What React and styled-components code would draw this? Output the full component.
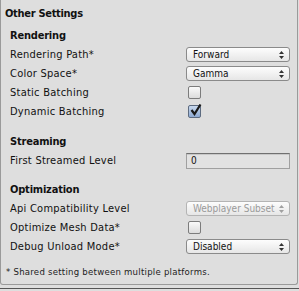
import React from 'react'
import styled, { createGlobalStyle } from 'styled-components'

const GlobalStyle = createGlobalStyle`
  html, body {
    margin: 0;
    padding: 0;
    background: #dedede;
  }
  body {
    width: 299px;
    height: 291px;
    overflow: hidden;
    font-family: "DejaVu Sans Condensed", "DejaVu Sans", "Liberation Sans", sans-serif;
    color: #111;
  }
`

const sections = [
  {
    title: 'Rendering',
    gap: 5,
    rows: [
      { label: 'Rendering Path*', type: 'select', value: 'Forward' },
      { label: 'Color Space*', type: 'select', value: 'Gamma' },
      { label: 'Static Batching', type: 'check', checked: false },
      { label: 'Dynamic Batching', type: 'check', checked: true },
    ],
  },
  {
    title: 'Streaming',
    gap: 12,
    rows: [{ label: 'First Streamed Level', type: 'field', value: '0' }],
  },
  {
    title: 'Optimization',
    gap: 11,
    rows: [
      { label: 'Api Compatibility Level', type: 'select', value: 'Webplayer Subset', disabled: true },
      { label: 'Optimize Mesh Data*', type: 'check', checked: false },
      { label: 'Debug Unload Mode*', type: 'select', value: 'Disabled' },
    ],
  },
]

const Arrows = () => (
  <svg width="5" height="8" viewBox="0 0 5 8">
    <path d="M2.5 0 L5 3 L0 3 Z M0 5 L5 5 L2.5 8 Z" fill="currentColor" />
  </svg>
)

const Check = () => (
  <svg width="13" height="13" viewBox="0 0 13 13">
    <path d="M2.5 6 L5.5 10 L11.5 0.5" fill="none" stroke="#1a1a1a" strokeWidth="2.2" />
  </svg>
)

const Control = ({ row }) => {
  if (row.type === 'select') {
    return (
      <Select disabled={row.disabled}>
        <span>{row.value}</span>
        <Arrows />
      </Select>
    )
  }
  if (row.type === 'check') {
    return <CheckBox checked={row.checked}>{row.checked && <Check />}</CheckBox>
  }
  return <Field>{row.value}</Field>
}

export default function App() {
  return (
    <>
      <GlobalStyle />
      <Panel>
        <Title>Other Settings</Title>
        {sections.map(section => (
          <Section key={section.title} gap={section.gap}>
            <SectionTitle>{section.title}</SectionTitle>
            {section.rows.map(row => (
              <Row key={row.label}>
                <Label>{row.label}</Label>
                <Control row={row} />
              </Row>
            ))}
          </Section>
        ))}
        <Note>* Shared setting between multiple platforms.</Note>
      </Panel>
      <Divider />
    </>
  )
}

const Panel = styled.div`
  box-sizing: border-box;
  width: 298px;
  height: 285px;
  border: 1px solid #9a9a9a;
  border-top: none;
  border-radius: 0 0 3px 3px;
  padding: 5px 0 0 0;
  display: flex;
  flex-direction: column;
`

const Title = styled.div`
  font-size: 11px;
  font-weight: bold;
  letter-spacing: -0.3px;
  padding-left: 4px;
  height: 17px;
  line-height: 17px;
`

const Section = styled.div`
  display: flex;
  flex-direction: column;
  padding-left: 9px;
  margin-top: ${p => p.gap}px;
`

const SectionTitle = styled.div`
  font-size: 11px;
  font-weight: bold;
  letter-spacing: -0.2px;
  height: 18px;
  line-height: 18px;
`

const Row = styled.div`
  display: grid;
  grid-template-columns: 176px 104px;
  align-items: center;
  height: 19px;
`

const Label = styled.div`
  font-size: 11px;
  letter-spacing: 0.25px;
  white-space: nowrap;
`

const Select = styled.div`
  box-sizing: border-box;
  height: 15px;
  display: flex;
  align-items: center;
  justify-content: space-between;
  padding: 0 5px 0 6px;
  border: 1px solid ${p => (p.disabled ? '#b4b4b4' : '#8a8a8a')};
  border-radius: 3px;
  background: linear-gradient(#fdfdfd, #e6e6e6);
  font-size: 10px;
  white-space: nowrap;
  color: ${p => (p.disabled ? '#9a9a9a' : '#111')};
  svg {
    flex: none;
    color: ${p => (p.disabled ? '#a0a0a0' : '#333')};
  }
`

const CheckBox = styled.div`
  position: relative;
  box-sizing: border-box;
  width: 13px;
  height: 13px;
  margin-left: 2px;
  border: 1px solid ${p => (p.checked ? '#5d6b80' : '#7c7c7c')};
  border-radius: 2px;
  background: ${p =>
    p.checked
      ? 'linear-gradient(#c8d8ee, #8eaad2)'
      : 'linear-gradient(#fafafa, #dcdcdc)'};
  svg {
    position: absolute;
    left: 0;
    top: -2px;
  }
`

const Field = styled.div`
  box-sizing: border-box;
  height: 16px;
  padding-left: 4px;
  border: 1px solid #a0a0a0;
  border-top-color: #707070;
  background: #e2e2e2;
  box-shadow: inset 0 1px 0 #c8c8c8;
  font-size: 10px;
  line-height: 14px;
`

const Note = styled.div`
  margin-top: auto;
  padding: 0 0 7px 5px;
  font-size: 9.5px;
  letter-spacing: 0.25px;
  color: #222;
`

const Divider = styled.div`
  margin-top: 3px;
  width: 299px;
  height: 1px;
  background: #555;
`
